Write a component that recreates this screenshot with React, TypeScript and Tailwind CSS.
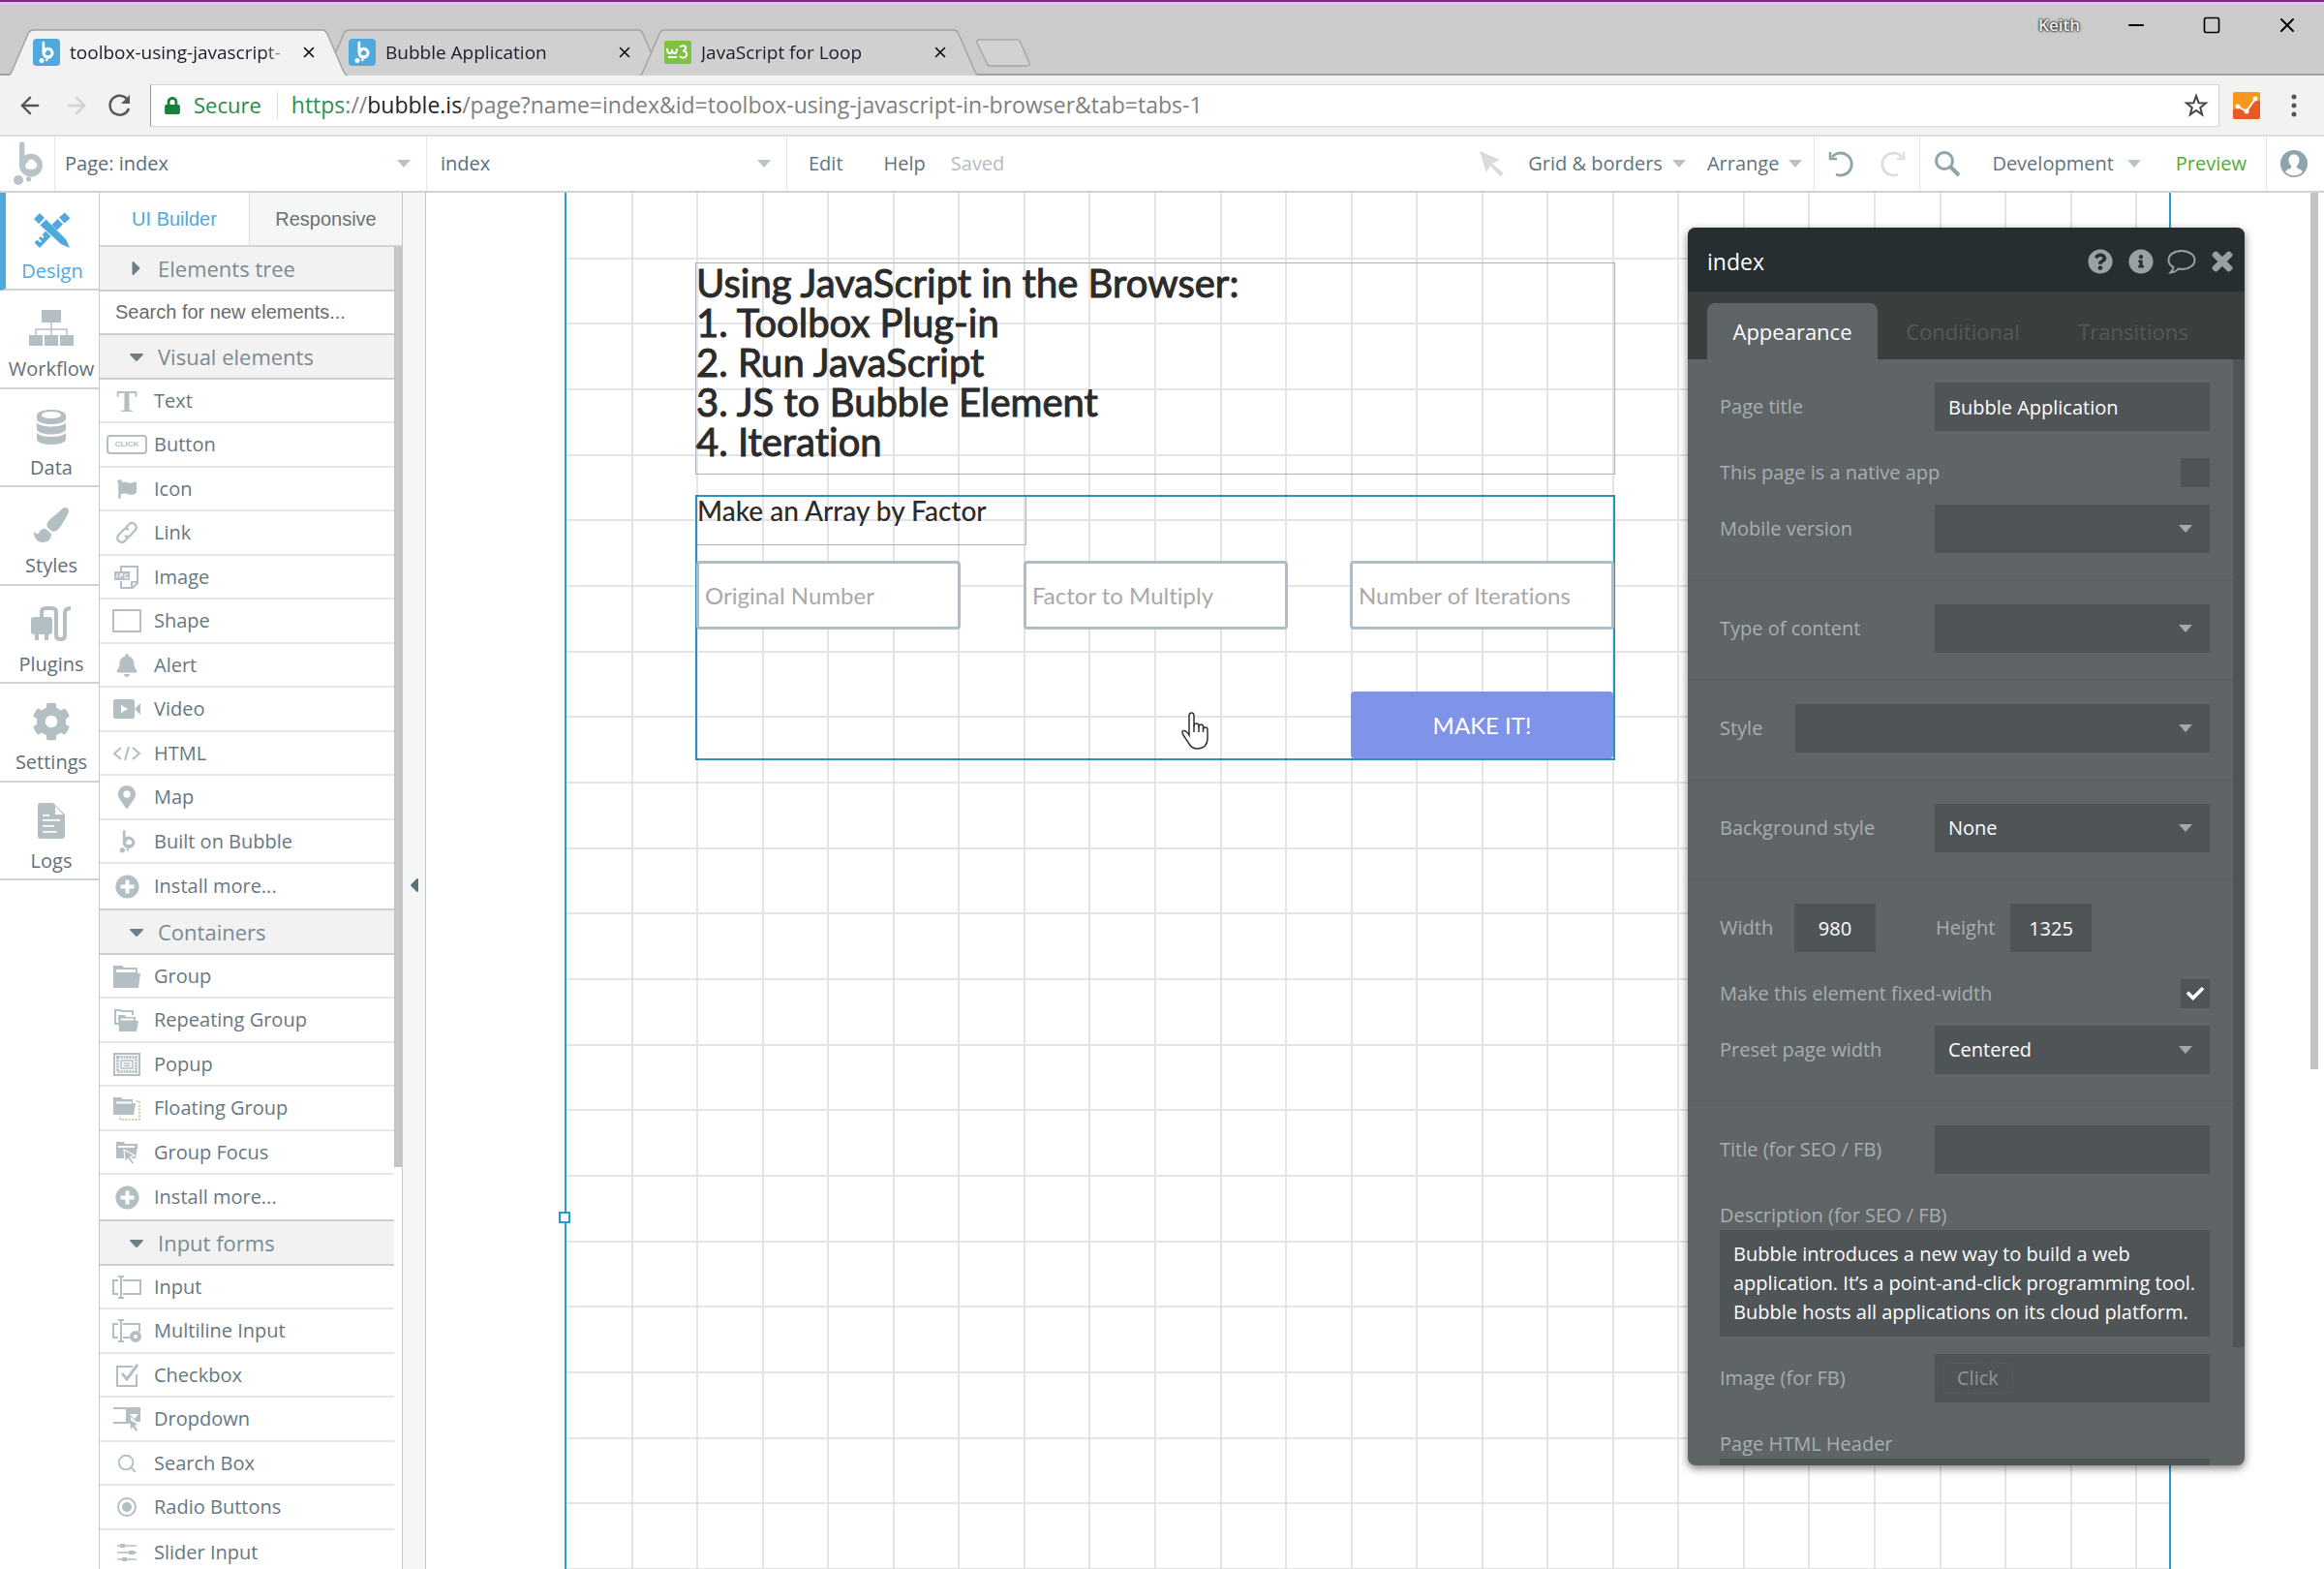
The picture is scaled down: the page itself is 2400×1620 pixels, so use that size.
import { useState, type ReactNode } from "react";
import {
  FaBell,
  FaCaretDown,
  FaCaretLeft,
  FaCaretRight,
  FaCheck,
  FaCog,
  FaFlag,
  FaInfoCircle,
  FaLock,
  FaMapMarkerAlt,
  FaPaintBrush,
  FaPlusCircle,
  FaQuestionCircle,
  FaTimes,
} from "react-icons/fa";
import { ArrowLeft, ArrowRight, Minus, Search, Square, X } from "lucide-react";

const sans = "font-['Open_Sans','Noto_Sans',sans-serif]";
const arial = "font-['Liberation_Sans',Arial,sans-serif]";
const lato = "font-['Lato',sans-serif] [font-variant-ligatures:none]";

/* ---------- Icons ---------- */

function BubbleLogo({ className }: { className?: string }) {
  return (
    <svg viewBox="0 0 32 46" className={className} fill="currentColor">
      <path d="M7 3a2.7 2.7 0 0 1 5.4 0v11.6A12 12 0 1 1 7 24zM19 18.5c-2 0-3 1.500-3.300 3-2.200 1-2.900 3-2.200 5 .8 2 3 2.700 5 2.300 3.500.6 6.500-1 6.700-4 .2-2.500-1.200-3.500-2.400-4-.6-1.400-2-2.300-3.800-2.300z" fillRule="evenodd" />
      <circle cx="6" cy="40" r="5" />
      <circle cx="16.500" cy="39" r="2.600" />
    </svg>
  );
}

function BubbleFavicon() {
  return (
    <span className="flex h-7 w-7 shrink-0 items-center justify-center rounded-sm bg-[#4fa9dc] text-white">
      <BubbleLogo className="h-6 w-4" />
    </span>
  );
}

function SchoolsFavicon() {
  return (
    <svg viewBox="0 0 28 28" className="h-7 w-7 shrink-0">
      <rect y="2" width="28" height="24" rx="2" fill="#7fc241" />
      <path d="M3 10q0 5 2.500 5T8 11q0 4 2.500 4T13 10M16 8.500c3-2.500 7-1 6 2-.5 1.500-2 2-3 2 3 0 5 2 4 5-1 2.500-5 3-7 .5M4 19h9" fill="none" stroke="#fff" strokeWidth="2" />
    </svg>
  );
}

function DesignIcon() {
  return (
    <svg viewBox="0 0 38 38" className="h-[38px] w-[38px]" fill="currentColor">
      <path d="M0 7l6-6 5 5-6 6zM6.500 13.500l6-6L33 28l4 9-9-4z" />
      <path d="M26 5.500l6-5 5.500 6-6 5zM24.500 7l5.500 5.500-6 6-5.500-5.500zM12 19.500l5.500 5.500-11.500 12-5.500-5.500 3-3 3 3 1.500-1.500-3-3 2-2 2 2 1.500-1.500-2-2z" />
    </svg>
  );
}

function WorkflowIcon() {
  return (
    <svg viewBox="0 0 46 38" className="h-[38px] w-[46px]" fill="currentColor">
      <path d="M13 0h20v13H13zM0 26h14v11H0zM16 26h14v11H16zM32 26h14v11H32z" />
      <path d="M23 13v13M7 26v-6h32v6" fill="none" stroke="currentColor" strokeWidth="1.500" />
    </svg>
  );
}

function DataIcon() {
  return (
    <svg viewBox="0 0 30 36" className="h-9 w-[30px]" fill="currentColor">
      <path fillRule="evenodd" d="M0 6c0-3.500 6.500-6 15-6s15 2.500 15 6v3.500c0 3-6.500 5.500-15 5.500S0 12.500 0 9.500zM5 5.500C5 7.500 9.500 9 15 9s10-1.500 10-3.500S20.500 2 15 2 5 3.500 5 5.500z" />
      <path d="M0 13.500c3 3 9 4 15 4s12-1 15-4V20c0 3-6.500 5.500-15 5.500S0 23 0 20zM0 24c3 3 9 4 15 4s12-1 15-4v6.500c0 3-6.500 5.500-15 5.500S0 33.500 0 30.500z" />
    </svg>
  );
}

function PluginsIcon() {
  return (
    <svg viewBox="0 0 42 36" className="h-9 w-[42px]" fill="currentColor">
      <rect y="11" width="22" height="18" rx="3" />
      <path d="M4 28h4v7H4zM14 28h4v7h-4z" />
      <path d="M11 12V6q0-4 4-4h7q4 0 4 4v24q0 4 4.500 4t4.500-4V7q0-5 6-5" fill="none" stroke="currentColor" strokeWidth="4" />
    </svg>
  );
}

function LogsIcon() {
  return (
    <svg viewBox="0 0 28 37" className="h-[37px] w-7" fill="currentColor">
      <path fillRule="evenodd" d="M3 0h13l12 12v22q0 3-3 3H3q-3 0-3-3V3q0-3 3-3zM18 3v9h8zM5 12h7v1.800H5zM5 17h18v1.800H5zM5 23h12v1.800H5zM5 29h15v1.800H5z" />
    </svg>
  );
}

function Glyph({ children }: { children: ReactNode }) {
  return (
    <svg viewBox="0 0 30 26" className="h-[26px] w-[30px]" fill="none" stroke="currentColor" strokeWidth="2">
      {children}
    </svg>
  );
}

const folder = "M1 2h9l2 2h14v6h3l-2 15H1zM4 9h20V6H4z";
const pointer = "M0 0l9 5-3.500 1.500 3.500 5-2 1.500-3.500-5L1 11z";

const glyphs: Record<string, ReactNode> = {
  text: <span className="font-['Liberation_Serif',serif] text-[32px] leading-none font-bold">T</span>,
  button: (
    <span className={`flex h-5 w-[42px] shrink-0 items-center justify-center rounded border-2 text-[8px] font-bold ${arial}`}>
      CLICK
    </span>
  ),
  icon: <FaFlag className="h-5 w-6" />,
  link: (
    <svg viewBox="0 0 24 24" className="h-6 w-6" fill="none" stroke="currentColor" strokeWidth="2.200">
      <path d="M10.500 7.500l4-4.500a4.500 4.500 0 0 1 6.500 6l-5 5.500a4.500 4.500 0 0 1-6 .5M13.500 16.500l-4 4.500a4.500 4.500 0 0 1-6.500-6l5-5.500a4.500 4.500 0 0 1 6-.5" />
    </svg>
  ),
  image: (
    <Glyph>
      <path d="M9 7V2h17v17l-5 5H9v-7M26 18h-6v6" />
      <path d="M2 7h16v9H2z" fill="currentColor" stroke="none" />
      <path d="M5 9v4H3.500M8 14V9.500h2.500v2H8M16 10h-3v4h3v-2" stroke="#fff" strokeWidth="1" />
    </Glyph>
  ),
  shape: (
    <Glyph>
      <path d="M1 2h28v22H1z" />
    </Glyph>
  ),
  alert: <FaBell className="h-6 w-6" />,
  video: (
    <Glyph>
      <path fillRule="evenodd" fill="currentColor" stroke="none" d="M3 3h18q2 0 2 2v16q0 2-2 2H3q-2 0-2-2V5q0-2 2-2zM9 9v8l7-4zM23 13l6-6v12z" />
    </Glyph>
  ),
  html: (
    <Glyph>
      <path d="M9 7l-7 6 7 6M21 7l7 6-7 6M17 6l-4 14" />
    </Glyph>
  ),
  map: <FaMapMarkerAlt className="h-6 w-6" />,
  bubble: <BubbleLogo className="h-6 w-[17px]" />,
  plus: <FaPlusCircle className="h-[25px] w-[25px]" />,
  group: (
    <Glyph>
      <path fillRule="evenodd" fill="currentColor" stroke="none" d={folder} />
    </Glyph>
  ),
  repeating: (
    <Glyph>
      <path d="M7 17H3V3h5l2 1h11v4" />
      <path fill="currentColor" stroke="none" d="M6 8h7l1 2h10v4h3l-2 11H7z" />
      <path d="M9 12.500h13" stroke="#fff" />
    </Glyph>
  ),
  popup: (
    <Glyph>
      <path d="M2 2h26v22H2z" />
      <path d="M5.500 5.500h19v15h-19z" strokeWidth="3" strokeDasharray="2 1" />
      <path d="M9 9h12v8H9z" strokeWidth="1.500" />
      <path d="M11.500 12h7M11.500 14.500h7" strokeWidth="1.500" />
    </Glyph>
  ),
  floating: (
    <Glyph>
      <path fill="currentColor" stroke="none" d="M1 2h8l2 2h10v4h3l-2 12H1z" />
      <path d="M4 7.500h16" stroke="#fff" />
      <path d="M25 6h3v19H8v-4" stroke="#d0b98c" strokeWidth="1.500" strokeDasharray="2 1.500" />
    </Glyph>
  ),
  focus: (
    <Glyph>
      <path fill="currentColor" stroke="none" d="M4 2h8l1 2h13v3l-2 12H4z" />
      <path d="M6 7h17" stroke="#fff" />
      <path d={pointer} transform="translate(12 10) scale(1.200)" fill="currentColor" stroke="#fff" strokeWidth="1" />
    </Glyph>
  ),
  input: (
    <Glyph>
      <path d="M6 6H1v14h5M11 6h18v14H11M9 2v22M6 2h6M6 24h6" />
    </Glyph>
  ),
  multiline: (
    <Glyph>
      <path d="M6 6H1v14h5M11 20h7M11 6h17v8M9 2v22M6 2h6M6 24h6" />
      <circle cx="24" cy="19" r="4" strokeWidth="4" />
    </Glyph>
  ),
  checkbox: (
    <Glyph>
      <path d="M21 4H5v20h20V12" />
      <path d="M10 11l5 6L26 2" strokeWidth="3" />
    </Glyph>
  ),
  dropdown: (
    <Glyph>
      <path d="M1 2h16M1 17h17M15 2v15" />
      <path fillRule="evenodd" fill="currentColor" stroke="none" d="M15 1h14v15h-4l-6-5v6h-4zM18 8h9l-4.500 5z" />
      <path d={pointer} transform="translate(18 14) scale(.9)" fill="currentColor" stroke="none" />
    </Glyph>
  ),
  search: <Search className="h-[22px] w-[22px]" />,
  radio: (
    <Glyph>
      <circle cx="15" cy="13" r="9" />
      <circle cx="15" cy="13" r="5" fill="currentColor" stroke="none" />
    </Glyph>
  ),
  slider: (
    <Glyph>
      <path d="M5 6h20M5 13h20M5 20h20" strokeWidth="1.500" />
      <path d="M8 4h5v4H8zM17 11h6v4h-6zM10 18h5v4h-5z" fill="currentColor" stroke="none" />
    </Glyph>
  ),
};

/* ---------- Data ---------- */

const browserTabs = [
  { title: "toolbox-using-javascript-", icon: <BubbleFavicon />, active: true },
  { title: "Bubble Application", icon: <BubbleFavicon />, active: false },
  { title: "JavaScript for Loop", icon: <SchoolsFavicon />, active: false },
];

const navItems = [
  { label: "Design", icon: <DesignIcon /> },
  { label: "Workflow", icon: <WorkflowIcon /> },
  { label: "Data", icon: <DataIcon /> },
  { label: "Styles", icon: <FaPaintBrush className="h-9 w-10" /> },
  { label: "Plugins", icon: <PluginsIcon /> },
  { label: "Settings", icon: <FaCog className="h-10 w-10" /> },
  { label: "Logs", icon: <LogsIcon /> },
];

const palette = [
  {
    title: "Visual elements",
    items: [
      ["text", "Text"],
      ["button", "Button"],
      ["icon", "Icon"],
      ["link", "Link"],
      ["image", "Image"],
      ["shape", "Shape"],
      ["alert", "Alert"],
      ["video", "Video"],
      ["html", "HTML"],
      ["map", "Map"],
      ["bubble", "Built on Bubble"],
      ["plus", "Install more..."],
    ],
  },
  {
    title: "Containers",
    items: [
      ["group", "Group"],
      ["repeating", "Repeating Group"],
      ["popup", "Popup"],
      ["floating", "Floating Group"],
      ["focus", "Group Focus"],
      ["plus", "Install more..."],
    ],
  },
  {
    title: "Input forms",
    items: [
      ["input", "Input"],
      ["multiline", "Multiline Input"],
      ["checkbox", "Checkbox"],
      ["dropdown", "Dropdown"],
      ["search", "Search Box"],
      ["radio", "Radio Buttons"],
      ["slider", "Slider Input"],
    ],
  },
];

/* ---------- Browser chrome ---------- */

function BrowserTab({ title, icon, active }: { title: string; icon: ReactNode; active: boolean }) {
  return (
    <div className={`relative -ml-6 flex h-12 w-[350px] items-center pl-[25px] ${active ? "z-10" : ""}`}>
      <svg viewBox="0 0 350 48" className="absolute inset-0 h-12 w-[350px]">
        <path
          d="M0 48Q2 47 4 42L20 5Q22 1 25 1H324Q327 1 329 5L345 42Q347 47 350 48"
          fill={active ? "#f2f2f2" : "#d0d0d0"}
          stroke="#a3a3a3"
          strokeWidth="1.500"
        />
      </svg>
      <div className="relative flex items-center">
        {icon}
        <button className="ml-2.5 w-[228px] overflow-hidden text-left text-[19px] whitespace-nowrap text-[#1c1c2c] [mask-image:linear-gradient(90deg,#000_88%,transparent)]">
          {title}
        </button>
        <button aria-label={`Close ${title}`} className="ml-2.5">
          <X className="h-[18px] w-[18px]" />
        </button>
      </div>
    </div>
  );
}

function BrowserChrome() {
  return (
    <div className="shrink-0">
      <div className="flex h-[78px] items-end border-t-2 border-[#7c2a86] bg-[#cbcbcb] pl-[33px] shadow-[inset_0_3px_0_#e6c3ea,inset_0_-2px_0_#a2a2a2]">
        {browserTabs.map((tab) => (
          <BrowserTab key={tab.title} {...tab} />
        ))}
        <button aria-label="New tab" className="mb-2 -ml-1">
          <svg viewBox="0 0 58 30" className="h-[30px] w-[58px]">
            <path d="M4 1h39q3 0 4 3l9 21q1 3-3 3H16q-3 0-4-3L2 4Q1 1 4 1z" fill="#d2d2d2" stroke="#a8a8a8" strokeWidth="1.500" />
          </svg>
        </button>
        <div className="ml-auto flex h-full items-start pt-3 pr-[26px]">
          <span className="mr-[46px] text-[17px] leading-6 font-semibold text-[#f4f4f4] [text-shadow:0_0_2px_#000,0_0_3px_#000]">Keith</span>
          <button aria-label="Minimize" className="mr-[54px]">
            <Minus className="h-6 w-6" strokeWidth={2} />
          </button>
          <button aria-label="Maximize" className="mr-[54px]">
            <Square className="h-6 w-6 p-0.5" />
          </button>
          <button aria-label="Close window">
            <X className="h-6 w-6" strokeWidth={2} />
          </button>
        </div>
      </div>
      <div className="flex h-[63px] items-center border-b-2 border-[#dfdfdf] bg-[#f2f2f2] pl-[17px]">
        <button aria-label="Back" className="mr-5 text-[#555]">
          <ArrowLeft className="h-7 w-7" />
        </button>
        <button aria-label="Forward" className="mr-4 text-[#d2d2d2]">
          <ArrowRight className="h-7 w-7" />
        </button>
        <button aria-label="Reload" className="mr-[18px] text-[#5a5a5a]">
          <svg viewBox="0 0 28 28" className="h-7 w-7" fill="none" stroke="currentColor" strokeWidth="2.500">
            <path d="M22 7A10 10 0 1 0 24 17" />
            <path d="M25 3v9H16z" fill="currentColor" stroke="none" />
          </svg>
        </button>
        <div className="flex h-11 flex-1 items-center border border-[#d5d5d5] border-l-[#999] bg-white pl-3.5">
          <FaLock className="h-[18px] w-4 text-[#188038]" />
          <span className="ml-3.5 text-[22px] text-[#2a8a43]">Secure</span>
          <span className="ml-4 h-7 border-l border-[#d8d8d8]" />
          <p className="ml-3.5 flex-1 text-[23px] whitespace-nowrap text-[#808080]">
            <span className="text-[#2f9150]">https</span>://<span className="text-[#222]">bubble.is</span>
            /page?name=index&amp;id=toolbox-using-javascript-in-browser&amp;tab=tabs-1
          </p>
          <button aria-label="Bookmark" className="mr-2.5 text-[#444]">
            <svg viewBox="0 0 26 26" className="h-[26px] w-[26px]" fill="none" stroke="currentColor" strokeWidth="2">
              <path d="M13 3l2.600 7.200 7.400.3-5.800 4.600 2 7.200L13 18l-6.200 4.300 2-7.200L3 10.500l7.400-.3z" />
            </svg>
          </button>
        </div>
        <svg viewBox="0 0 28 28" className="ml-3.5 h-7 w-7">
          <rect width="28" height="28" rx="2" fill="#f7981d" />
          <path d="M0 19l5-4 9 5 9-13 5 3v16q0 2-2 2H2q-2 0-2-2z" fill="#e65a26" />
          <path d="M5 15l9 5 9-13" fill="none" stroke="#fff" strokeWidth="2" />
          <circle cx="5" cy="15" r="2.500" fill="#fff" />
          <circle cx="14" cy="20" r="2.500" fill="#fff" />
          <circle cx="23" cy="7" r="2.500" fill="#fff" />
        </svg>
        <button aria-label="Menu" className="mr-7 ml-8 text-[#555]">
          <svg viewBox="0 0 6 24" className="h-6 w-1.5" fill="currentColor">
            <circle cx="3" cy="3" r="2.500" />
            <circle cx="3" cy="12" r="2.500" />
            <circle cx="3" cy="21" r="2.500" />
          </svg>
        </button>
      </div>
    </div>
  );
}

/* ---------- Editor header ---------- */

function Caret({ className = "" }: { className?: string }) {
  return (
    <svg viewBox="0 0 14 8" className={`h-2 w-3.5 ${className}`} fill="currentColor">
      <path d="M0 0h14L7 8z" />
    </svg>
  );
}

function HeaderSelect({ label, value, className }: { label: string; value: string; className: string }) {
  return (
    <div className={`relative flex items-center border-r border-[#e2e6e8] ${className}`}>
      <select aria-label={label} className="h-full w-full appearance-none bg-transparent text-[#5a6d78] outline-none">
        <option>{value}</option>
      </select>
      <Caret className="pointer-events-none absolute right-4 text-[#b8c2c8]" />
    </div>
  );
}

function EditorHeader() {
  return (
    <header className="flex h-[58px] shrink-0 items-stretch border-b-2 border-[#cfd1d2] bg-white text-[20px] text-[#5f7480]">
      <div className="flex w-[57px] items-center border-r border-[#e2e6e8] pl-[13px] text-[#b9c4ca]">
        <BubbleLogo className="h-[46px] w-8" />
      </div>
      <HeaderSelect label="Page" value="Page: index" className="w-96 pl-2.5" />
      <HeaderSelect label="Element" value="index" className="w-[372px] pl-3.5" />
      <button className="ml-[22px]">Edit</button>
      <button className="ml-[42px]">Help</button>
      <span className="ml-[26px] self-center text-[#b5bcc0]">Saved</span>
      <div className="ml-auto flex items-center">
        <svg viewBox="0 0 26 26" className="h-[26px] w-[26px]" fill="#d8dadb">
          <path d="M0 0l21 9-8 4 12 10-4 3-10-11-4 7z" />
        </svg>
        <button className="ml-6 flex items-center gap-2.5">
          Grid &amp; borders <Caret className="h-2 w-3 text-[#b8c2c8]" />
        </button>
        <button className="ml-[22px] flex items-center gap-2.5">
          Arrange <Caret className="h-2 w-3 text-[#b8c2c8]" />
        </button>
      </div>
      <div className="ml-3 flex w-[110px] items-center justify-between border-x border-[#e2e6e8] px-3.5">
        <button aria-label="Undo" className="text-[#8fa3ad]">
          <svg viewBox="0 0 28 28" className="h-7 w-7" fill="none" stroke="currentColor" strokeWidth="2.800">
            <path d="M4 7A11.500 11.500 0 1 1 8 25" />
            <path d="M2 2v7h7" strokeWidth="2.500" />
          </svg>
        </button>
        <button aria-label="Redo" className="text-[#dcdfe0]">
          <svg viewBox="0 0 28 28" className="h-7 w-7" fill="none" stroke="currentColor" strokeWidth="2.800">
            <path d="M24 7A11.500 11.500 0 1 0 20 25" />
            <path d="M26 2v7h-7" strokeWidth="2.500" />
          </svg>
        </button>
      </div>
      <button aria-label="Search" className="ml-3.5 text-[#8fa3ad]">
        <svg viewBox="0 0 28 28" className="h-7 w-7" fill="none" stroke="currentColor" strokeWidth="3">
          <circle cx="11" cy="11" r="8.500" />
          <path d="M17 17l9 9" strokeWidth="4" />
        </svg>
      </button>
      <button className="ml-8 flex items-center gap-3.5">
        Development <Caret className="text-[#b8c2c8]" />
      </button>
      <a href="#preview" className="ml-9 flex items-center pr-5 text-[#4caf2f]">
        Preview
      </a>
      <button aria-label="Account" className="border-l border-[#e2e6e8] pr-[17px] pl-3.5 text-[#8fa3ad]">
        <svg viewBox="0 0 28 28" className="h-7 w-7">
          <circle cx="14" cy="14" r="14" fill="currentColor" />
          <path d="M14 4.500c3.500 0 5.500 2.500 5.500 6 0 2.500-1.200 4.500-2.700 5.700V18c1.500 1.500 5 1.700 6.200 4.200a12 12 0 0 1-18 0C6.200 19.700 9.700 19.500 11.200 18v-1.800C9.700 15 8.500 13 8.500 10.500c0-3.500 2-6 5.500-6z" fill="#fff" />
        </svg>
      </button>
    </header>
  );
}

/* ---------- Left side ---------- */

function SideNav() {
  const [current, setCurrent] = useState("Design");
  return (
    <nav className="w-[103px] shrink-0 border-r border-[#c4c8ca] bg-white">
      {navItems.map(({ label, icon }) => {
        const active = label === current;
        return (
          <button
            key={label}
            onClick={() => setCurrent(label)}
            className={`flex h-[101px] w-full flex-col items-center border-b-2 border-[#d0d3d5] pt-[19px] text-[20px] even:h-[102px] ${
              active ? "border-l-[6px] border-l-[#4fa9dc] text-[#4fa9dc]" : "pl-1 text-[#5f6f78]"
            }`}
          >
            <span className={`flex h-10 items-center ${active ? "" : "text-[#b3bfc2]"}`}>{icon}</span>
            <span className="mt-2 leading-7">{label}</span>
          </button>
        );
      })}
    </nav>
  );
}

function SectionHeader({ title, open = true }: { title: string; open?: boolean }) {
  return (
    <button className="flex h-[46px] w-full items-center border-b-2 border-[#cfcfcf] bg-[#f2f2f2] text-[22px] text-[#7b8a92]">
      <span className="flex w-[60px] justify-center pl-4 text-[#6d8088]">
        {open ? <FaCaretDown className="h-6 w-6" /> : <FaCaretRight className="h-6 w-6" />}
      </span>
      {title}
    </button>
  );
}

function Palette() {
  return (
    <aside className="flex w-[313px] shrink-0 flex-col border-r border-[#c9c9c9]">
      <div className={`flex h-14 shrink-0 border-b-2 border-[#d4d4d4] text-[20px] ${arial}`}>
        <button className="w-[155px] border-r border-[#ddd] text-[#4fa9dc]">UI Builder</button>
        <button className="flex-1 bg-[#f5f7f7] text-[#6b6f72]">Responsive</button>
      </div>
      <div className="flex flex-1 items-start overflow-hidden">
        <div className="flex-1">
          <SectionHeader title="Elements tree" open={false} />
          <input
            aria-label="Search for new elements"
            placeholder="Search for new elements..."
            className={`block h-[45px] w-full border-b-2 border-[#cfcfcf] pl-4 text-[20px] outline-none placeholder:text-[#6b6b6b] ${arial}`}
          />
          {palette.map((section) => (
            <section key={section.title}>
              <SectionHeader title={section.title} />
              <ul className="border-b-2 border-[#cfcfcf] text-[20px] text-[#68777f]">
                {section.items.map(([icon, label]) => (
                  <li key={label} className="flex h-[45px] items-center border-b-2 border-[#e6e6e6] last:border-b-0 even:h-[46px]">
                    <span className="flex w-14 justify-center text-[#b3bfc2]">{glyphs[icon]}</span>
                    {label}
                  </li>
                ))}
              </ul>
            </section>
          ))}
        </div>
        <div className="h-[950px] w-2 bg-[#c4c4c4]" />
      </div>
    </aside>
  );
}

/* ---------- Canvas ---------- */

const COLS = 24.5;
const ROWS = 21;

function GridLines() {
  return (
    <svg className="absolute inset-0 h-full w-full" stroke="#e4e4e4" strokeWidth="2" shapeRendering="crispEdges">
      {Array.from({ length: 24 }, (_, i) => {
        const x = `${((i + 1) / COLS) * 100}%`;
        return <line key={`v${i}`} x1={x} x2={x} y1="0" y2="100%" />;
      })}
      {Array.from({ length: ROWS }, (_, i) => {
        const y = `${((i + 1) / ROWS) * 100}%`;
        return <line key={`h${i}`} x1="0" x2="100%" y1={y} y2={y} />;
      })}
    </svg>
  );
}

const fieldBox =
  "absolute top-[66px] h-[71px] w-[273px] rounded-sm border-[3px] border-[#b0bcc6] bg-white pl-[6px] text-[24px] placeholder:text-[#a9a9a9]";

function Canvas() {
  return (
    <main className="relative flex-1 overflow-hidden bg-white">
      <div className={`relative ml-[143px] h-[1421px] w-[1659px] border-x-2 border-[#2a9ccc] ${lato}`}>
        <GridLines />
        <div className="absolute top-[72px] left-[133px] h-[219px] w-[950px] border border-[#a9b4ba] text-[40px] leading-[41px] text-[#2b2b2b] [-webkit-text-stroke:1px_#2b2b2b]">
          Using JavaScript in the Browser:
          <br />
          1. Toolbox Plug-in
          <br />
          2. Run JavaScript
          <br />
          3. JS to Bubble Element
          <br />
          4. Iteration
        </div>
        <div className="absolute top-[312px] left-[133px] h-[274px] w-[950px] border-2 border-[#2593bf]">
          <div className="h-[50px] w-[340px] border-r border-b border-[#a9b4ba] text-[28px] leading-7 font-medium text-[#2b2b2b]">
            Make an Array by Factor
          </div>
          <input aria-label="Original Number" placeholder="Original Number" className={`${fieldBox} left-[-1px]`} />
          <input aria-label="Factor to Multiply" placeholder="Factor to Multiply" className={`${fieldBox} left-[337px]`} />
          <input aria-label="Number of Iterations" placeholder="Number of Iterations" className={`${fieldBox} left-[674px]`} />
          <button className="absolute right-0 bottom-0 h-[69px] w-[271px] rounded-sm bg-[#7f93e9] text-[24px] text-white">MAKE IT!</button>
        </div>
        <span className="absolute top-[1052px] -left-2 h-3 w-3 border-2 border-[#2a9ccc] bg-white" />
        {/* Hand cursor */}
        <svg viewBox="0 0 28 39" className="absolute top-[536px] left-[635px] h-[39px] w-7" fill="#fff" stroke="#333" strokeWidth="1.500">
          <path d="M8 24V4q0-3 2.500-3T13 4v11q0-3 2.500-3t2.500 3v1q0-3 2.300-3t2.300 3v2q0-2 2.200-2T27 18v9q0 11-11 11-5 0-8-5l-6-9q-2-4 0-4.500Q5 19 8 24z" />
          <path d="M13 14v7M18 15v6M22.500 17v4" />
        </svg>
      </div>
      <div className="absolute top-0 right-[6px] h-[905px] w-2 bg-[#c4c4c4]" />
      <PropertyPanel />
    </main>
  );
}

/* ---------- Property panel ---------- */

const field = "h-[50px] bg-[#4f5457] text-white outline-none";

function Row({ id, label, children }: { id: string; label: string; children: ReactNode }) {
  return (
    <div className="flex items-center justify-between">
      <label htmlFor={id}>{label}</label>
      {children}
    </div>
  );
}

function PanelSelect({ id, value, wide = false }: { id: string; value: string; wide?: boolean }) {
  return (
    <div className={`relative flex items-center ${wide ? "w-[428px]" : "w-[284px]"}`}>
      <select id={id} className={`${field} w-full appearance-none px-3.5`}>
        <option>{value}</option>
      </select>
      <Caret className="pointer-events-none absolute right-[18px] text-[#a3a8aa]" />
    </div>
  );
}

function Tick({ id, checked }: { id: string; checked: boolean }) {
  const [on, setOn] = useState(checked);
  return (
    <span className="relative flex h-[30px] w-[30px] items-center justify-center">
      <input id={id} type="checkbox" checked={on} onChange={() => setOn(!on)} className="h-full w-full appearance-none bg-[#4f5457]" />
      {on && <FaCheck className="pointer-events-none absolute h-5 w-[18px] text-white" />}
    </span>
  );
}

const section = "border-t-2 border-[#5a5f62] pt-6 pb-[27px] pl-[33px] pr-6";

function PropertyPanel() {
  return (
    <div className={`absolute top-9 right-[82px] flex h-[1278px] w-[575px] flex-col overflow-hidden rounded-lg bg-[#5f6467] text-[20px] text-[#a9aeb0] shadow-[0_3px_8px_rgba(0,0,0,0.5)] ${sans}`}>
      <div className="flex h-[66px] shrink-0 items-center bg-[#272e31] pt-1 pr-3 pl-5 text-[#9aa1a4]">
        <h2 className="mr-auto text-[23px] text-white">index</h2>
        <button aria-label="Help" className="mr-4">
          <FaQuestionCircle className="h-[26px] w-[26px]" />
        </button>
        <button aria-label="Info" className="mr-3.5">
          <FaInfoCircle className="h-[26px] w-[26px]" />
        </button>
        <button aria-label="Comment" className="mr-4">
          <svg viewBox="0 0 30 26" className="h-[26px] w-[30px]" fill="none" stroke="currentColor" strokeWidth="2">
            <path d="M15 2C7.500 2 1.500 6 1.500 11.500c0 3.500 2 6 5 7.500-.3 2.500-1.500 4-3 5.500 3.500-.3 6-1.500 8-4 1 .3 2.300.4 3.500.4 7.500 0 13.500-4 13.500-9.400S22.500 2 15 2z" />
          </svg>
        </button>
        <button aria-label="Close">
          <FaTimes className="h-7 w-[22px]" stroke="currentColor" strokeWidth="30" />
        </button>
      </div>
      <div className="flex h-[70px] shrink-0 items-end bg-[#3a3e3f] pl-5 text-[22px] text-[#55595a]">
        <button className="h-[58px] w-44 rounded-t-lg bg-[#5f6467] text-white">Appearance</button>
        <button className="h-[58px] w-44">Conditional</button>
        <button className="h-[58px] w-44">Transitions</button>
      </div>
      <div className="flex flex-1 items-start overflow-hidden">
        <form className="w-[563px]">
          <div className="pt-6 pr-6 pb-[27px] pl-[33px]">
            <Row id="page-title" label="Page title">
              <input id="page-title" defaultValue="Bubble Application" className={`${field} w-[284px] px-3.5`} />
            </Row>
            <div className="mt-7 mb-[18px]">
              <Row id="native" label="This page is a native app">
                <Tick id="native" checked={false} />
              </Row>
            </div>
            <Row id="mobile" label="Mobile version">
              <PanelSelect id="mobile" value="" />
            </Row>
          </div>
          <div className={section}>
            <Row id="content-type" label="Type of content">
              <PanelSelect id="content-type" value="" />
            </Row>
          </div>
          <div className={section}>
            <Row id="style" label="Style">
              <PanelSelect id="style" value="" wide />
            </Row>
          </div>
          <div className={section}>
            <Row id="background" label="Background style">
              <PanelSelect id="background" value="None" />
            </Row>
          </div>
          <div className={section}>
            <div className="flex items-center">
              <label htmlFor="width" className="w-[77px]">
                Width
              </label>
              <input id="width" defaultValue="980" className={`${field} w-[84px] text-center`} />
              <label htmlFor="height" className="ml-[62px] w-[77px]">
                Height
              </label>
              <input id="height" defaultValue="1325" className={`${field} w-[84px] text-center`} />
            </div>
            <div className="mt-7 mb-[18px]">
              <Row id="fixed" label="Make this element fixed-width">
                <Tick id="fixed" checked />
              </Row>
            </div>
            <Row id="preset" label="Preset page width">
              <PanelSelect id="preset" value="Centered" />
            </Row>
          </div>
          <div className={section}>
            <Row id="seo-title" label="Title (for SEO / FB)">
              <input id="seo-title" className={`${field} w-[284px] px-3.5`} />
            </Row>
            <label htmlFor="description" className="mt-7 block leading-[30px]">
              Description (for SEO / FB)
            </label>
            <textarea
              id="description"
              rows={3}
              className="mb-[18px] block h-[110px] w-full resize-none overflow-hidden bg-[#4f5457] py-2.5 pl-3.5 leading-[30px] whitespace-pre text-white outline-none"
              defaultValue={
                "Bubble introduces a new way to build a web\napplication. It’s a point-and-click programming tool.\nBubble hosts all applications on its cloud platform."
              }
            />
            <Row id="fb-image" label="Image (for FB)">
              <div className="flex h-[50px] w-[284px] items-center bg-[#4f5457] pl-2">
                <button id="fb-image" type="button" className="rounded border border-dashed border-[#585d60] px-3.5 text-[#8f9497]">
                  Click
                </button>
              </div>
            </Row>
            <label htmlFor="html-header" className="mt-7 block leading-[30px]">
              Page HTML Header
            </label>
            <textarea id="html-header" className="block h-[110px] w-full resize-none bg-[#4f5457]" />
          </div>
        </form>
        <div className="h-[1020px] w-3 bg-[#4f5457]" />
      </div>
    </div>
  );
}

export default function App() {
  return (
    <div className={`flex h-screen flex-col overflow-hidden bg-white ${sans}`}>
      <BrowserChrome />
      <EditorHeader />
      <div className="flex min-h-0 flex-1">
        <SideNav />
        <Palette />
        <button
          aria-label="Collapse palette"
          className="flex w-6 shrink-0 items-center justify-center border-r border-[#c9c9c9] bg-[#f5f7f7] pt-2 text-[#5f7076]"
        >
          <FaCaretLeft className="h-6 w-6" />
        </button>
        <Canvas />
      </div>
    </div>
  );
}
